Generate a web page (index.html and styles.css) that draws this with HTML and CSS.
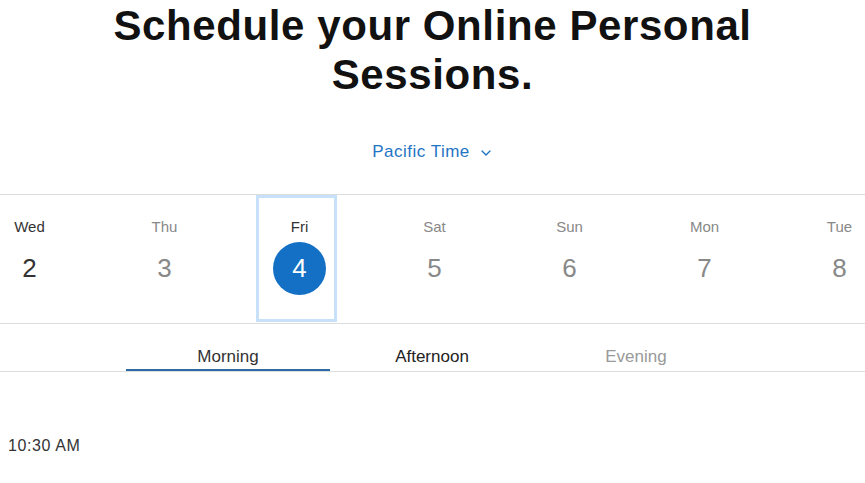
FILE: index.html
```html
<!DOCTYPE html>
<html lang="en">
<head>
<meta charset="utf-8">
<title>Schedule your Online Personal Sessions.</title>
<link rel="stylesheet" href="styles.css">
</head>
<body>
<main class="page">
  <h1 class="title">Schedule your Online Personal Sessions.</h1>
  <div class="tz">
    <button class="tz-btn" type="button">
      <span>Pacific Time</span>
      <svg class="chev" width="10" height="6" viewBox="0 0 10 6" aria-hidden="true"><path d="M1 1l4 4 4-4" fill="none" stroke="currentColor" stroke-width="1.4" stroke-linecap="round" stroke-linejoin="round"/></svg>
    </button>
  </div>
  <div class="days">
    <div class="days-track">
      <div class="day day-active"><span class="day-name">Wed</span><span class="day-num">2</span></div>
      <div class="day"><span class="day-name">Thu</span><span class="day-num">3</span></div>
      <div class="day day-selected"><span class="day-name">Fri</span><span class="day-num">4</span></div>
      <div class="day"><span class="day-name">Sat</span><span class="day-num">5</span></div>
      <div class="day"><span class="day-name">Sun</span><span class="day-num">6</span></div>
      <div class="day"><span class="day-name">Mon</span><span class="day-num">7</span></div>
      <div class="day"><span class="day-name">Tue</span><span class="day-num">8</span></div>
    </div>
  </div>
  <div class="tabs">
    <div class="tab tab-current">Morning</div>
    <div class="tab tab-on">Afternoon</div>
    <div class="tab tab-off">Evening</div>
  </div>
  <div class="slots">
    <div class="slot">10:30 AM</div>
  </div>
</main>
</body>
</html>
```

FILE: styles.css
```css
html, body {
  margin: 0;
  padding: 0;
  background: #ffffff;
}
body {
  font-family: "Liberation Sans", Arial, Helvetica, sans-serif;
  color: #333333;
  width: 865px;
  height: 483px;
  overflow: hidden;
}
.page {
  display: flex;
  flex-direction: column;
}
.title {
  margin: 0 auto;
  padding-top: 1px;
  max-width: 700px;
  text-align: center;
  font-size: 42px;
  line-height: 49px;
  font-weight: 700;
  letter-spacing: 0.6px;
  color: #111111;
}
.tz {
  display: flex;
  justify-content: center;
  margin-top: 43px;
}
.tz-btn {
  display: flex;
  align-items: center;
  gap: 11px;
  padding: 0;
  margin-left: -2px;
  border: 0;
  background: none;
  font-family: inherit;
  font-size: 17px;
  line-height: 20px;
  letter-spacing: 0.5px;
  color: #1f74c4;
}
.chev {
  margin-top: 1px;
}
.days {
  margin-top: 32px;
  border-top: 1px solid #dddddd;
  border-bottom: 1px solid #dddddd;
  height: 128px;
  display: flex;
  justify-content: center;
  overflow: hidden;
  padding-left: 4px;
}
.days-track {
  display: flex;
  flex-shrink: 0;
}
.day {
  width: 135px;
  flex-shrink: 0;
  display: flex;
  flex-direction: column;
  align-items: center;
  padding-top: 23px;
  box-sizing: border-box;
  color: #888888;
  position: relative;
}
.day-name {
  font-size: 15px;
  line-height: 18px;
}
.day-num {
  margin-top: 6px;
  width: 53px;
  height: 53px;
  border-radius: 50%;
  display: flex;
  align-items: center;
  justify-content: center;
  font-size: 26px;
}
.day-active {
  color: #333333;
}
.day-selected .day-name {
  color: #333333;
}
.day-selected .day-num {
  background: #1470c4;
  color: #ffffff;
}
.day-selected::before {
  content: "";
  position: absolute;
  left: 24px;
  top: 0;
  width: 81px;
  height: 127px;
  box-sizing: border-box;
  border: 3px solid #c7e1fa;
}
.tabs {
  display: flex;
  justify-content: center;
  padding-right: 1px;
  border-bottom: 1px solid #dddddd;
}
.tab {
  width: 204px;
  text-align: center;
  padding: 23px 0 2px;
  font-size: 17px;
  line-height: 20px;
  border-bottom: 2px solid transparent;
}
.tab-current {
  color: #333333;
  border-bottom-color: #2f6aa8;
}
.tab-on {
  color: #222222;
}
.tab-off {
  color: #999999;
}
.slots {
  padding: 64px 8px 0;
}
.slot {
  font-size: 16px;
  line-height: 20px;
  letter-spacing: 0.6px;
  color: #333333;
}
```
